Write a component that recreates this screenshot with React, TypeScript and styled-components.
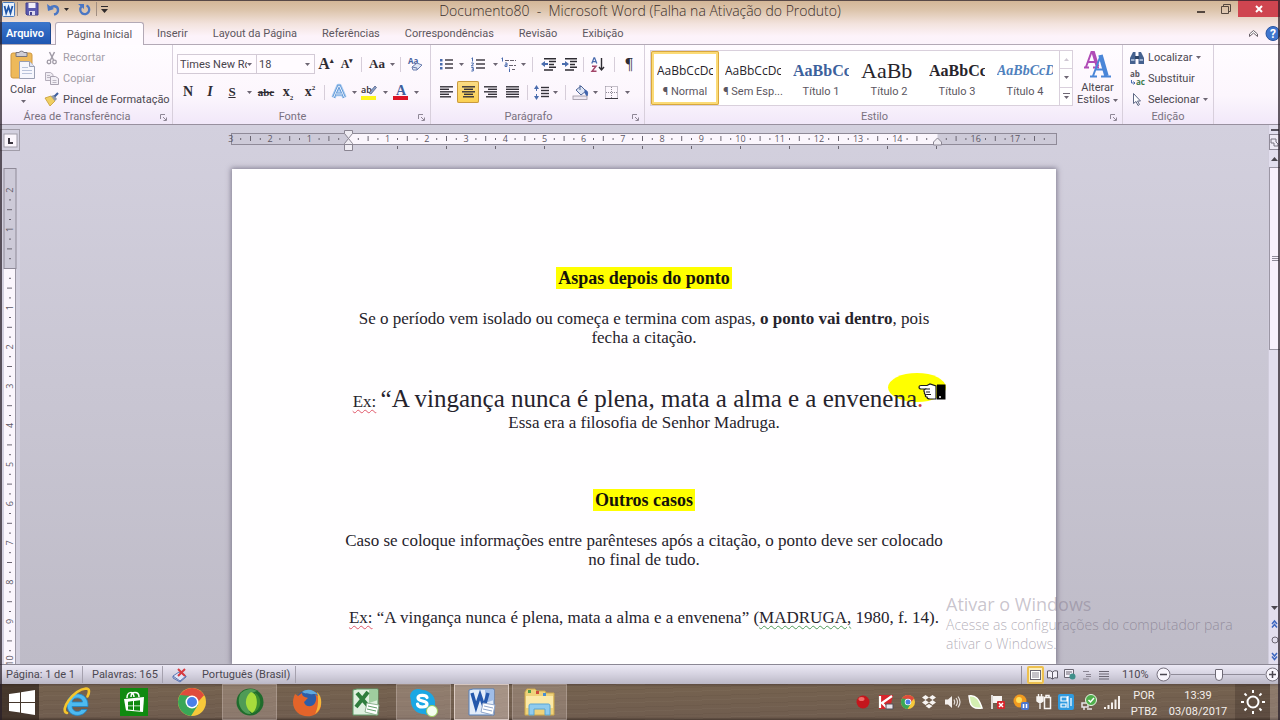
import React from 'react';
import styled, { createGlobalStyle, css } from 'styled-components';

const ui = 'Roboto, "Open Sans", sans-serif';
const humanist = '"Open Sans", "Noto Sans", sans-serif';
const serif = '"Liberation Serif", serif';

const GlobalStyle = createGlobalStyle`
  *, *::before, *::after { box-sizing: border-box; }
  body { margin: 0; font-family: ${ui}; font-size: 11px; color: #4b4750; overflow: hidden; }
  button, input, select { font: inherit; color: inherit; }
  svg { display: block; flex: none; overflow: visible; }
`;

const AppWindow = styled.div`
  position: relative;
  display: flex;
  flex-direction: column;
  height: 100vh;
  &::after {
    content: '';
    position: absolute;
    inset: 0;
    pointer-events: none;
    border: solid rgba(40, 30, 40, 0.72);
    border-width: 1px 2px 0 2px;
  }
`;

/* ---------- header ---------- */

const Header = styled.header`
  flex: none;
  background: linear-gradient(#d2b595 0, #dcc4ab 10px, #f3e3de 24px, #fdf3fa 36px, #fbf3fb 44px);
`;

const TitleBar = styled.div`
  display: grid;
  grid-template-columns: 1fr auto 1fr;
  height: 22px;
`;

const QuickAccess = styled.div`
  display: flex;
  align-items: center;
  padding-bottom: 4px;
`;

const PlainButton = styled.button`
  display: inline-flex;
  align-items: center;
  justify-content: center;
  padding: 0;
  border: 0;
  background: none;
  white-space: nowrap;
`;

const QuickButton = styled(PlainButton)<{ $w: number }>`
  width: ${(p) => p.$w}px;
  height: 18px;
`;

const QuickDivider = styled.span`
  width: 1px;
  height: 14px;
  background: #a18e82;
`;

const WindowTitle = styled.h1`
  margin: 0;
  font-family: ${humanist};
  font-size: 14px;
  line-height: 22px;
  font-weight: 300;
  color: #3a2e2b;
  white-space: pre;
`;

const WindowControls = styled.div`
  display: flex;
  justify-content: flex-end;
  align-items: flex-start;
`;

const ControlButton = styled(PlainButton)<{ $close?: boolean }>`
  width: ${(p) => (p.$close ? 42 : 25)}px;
  height: 17px;
  ${(p) => p.$close && css`background: #cf4550;`}
`;

const TabBar = styled.nav`
  display: flex;
  align-items: stretch;
  height: 23px;
  border-bottom: 1px solid #b3a9b6;
`;

const FileTab = styled(PlainButton)`
  width: 51px;
  color: #fff;
  font-weight: 600;
  background: linear-gradient(#3b76cc, #1f56b2);
  border-right: 1px solid #1c478f;
  border-radius: 0 3px 0 0;
`;

const Tab = styled(PlainButton)<{ $active?: boolean }>`
  padding: 0 12px;
  margin-left: ${(p) => (p.$active ? 4 : 1)}px;
  color: #5d5760;
  ${(p) =>
    p.$active &&
    css`
      width: 89px;
      margin-bottom: -1px;
      background: #fffbff;
      border: 1px solid #b3a9b6;
      border-bottom: 0;
      border-radius: 3px 3px 0 0;
    `}
`;

const TabBarEnd = styled.div`
  display: flex;
  align-items: center;
  gap: 7px;
  margin-left: auto;
  overflow: hidden;
`;

/* ---------- ribbon ---------- */

const Ribbon = styled.div`
  display: flex;
  flex: none;
  height: 80px;
  background: linear-gradient(#fffcff 0, #fcf6fd 50px, #f1e7f9 80px);
  border-bottom: 1px solid #98909f;
`;

const Group = styled.section<{ $w: number }>`
  display: flex;
  flex-direction: column;
  flex: none;
  width: ${(p) => p.$w}px;
  border-right: 1px solid #d8cfdc;
`;

const GroupBody = styled.div<{ $pad?: number }>`
  display: flex;
  flex: 1;
  min-height: 0;
  padding: 2px 0 0 ${(p) => p.$pad || 4}px;
`;

const GroupLabel = styled.div`
  display: flex;
  flex: none;
  height: 16px;
  line-height: 18px;
  text-align: center;
  color: #79717f;
  & > span { flex: 1; }
  & > button { width: 18px; height: 18px; }
`;

const BigButton = styled(PlainButton)<{ $w: number }>`
  flex-direction: column;
  justify-content: flex-start;
  flex: none;
  gap: 4px;
  width: ${(p) => p.$w}px;
  padding-top: 3px;
  line-height: 12px;
`;

const TwoLines = styled.span`
  display: grid;
  justify-items: center;
  span { display: flex; align-items: center; gap: 3px; }
`;

const Stack = styled.div`
  display: flex;
  flex-direction: column;
  align-items: flex-start;
`;

const RowButton = styled(PlainButton)<{ $dim?: boolean }>`
  flex: none;
  height: 21px;
  gap: 1px;
  color: ${(p) => (p.$dim ? '#a49ea8' : '#4b4750')};
  & > svg { margin-left: 3px; }
`;

const ToolRows = styled.div`
  display: flex;
  flex-direction: column;
  gap: 6px;
  padding-top: 6px;
`;

const ToolRow = styled.div`
  display: flex;
  align-items: center;
  height: 22px;
`;

const ToolButton = styled(PlainButton)<{ $active?: boolean }>`
  height: 22px;
  ${(p) =>
    p.$active &&
    css`
      background: linear-gradient(#fbdc86, #fbd04f);
      box-shadow: inset 0 0 0 1px #c99a3e;
      border-radius: 2px;
    `}
`;

const Cell = styled.span<{ $w: number }>`
  display: flex;
  justify-content: center;
  align-items: center;
  width: ${(p) => p.$w}px;
`;

const Divider = styled.span<{ $w: number }>`
  width: ${(p) => p.$w}px;
  height: 15px;
  background: linear-gradient(#d6cdd9, #d6cdd9) center / 1px 100% no-repeat;
`;

const Combo = styled.label<{ $w: number }>`
  display: flex;
  align-items: center;
  width: ${(p) => p.$w}px;
  height: 20px;
  padding-right: 4px;
  background: #fffbff;
  border: 1px solid #d3cad6;
  & + & { border-left: 0; }
  select {
    flex: 1;
    min-width: 0;
    padding: 0 0 0 2px;
    border: 0;
    background: none;
    appearance: none;
    overflow: hidden;
    text-overflow: clip;
    color: #47434b;
  }
`;

const Glyph = styled.span<{ $size: number; $bold?: boolean; $italic?: boolean; $line?: string }>`
  font-family: ${serif};
  font-size: ${(p) => p.$size}px;
  line-height: 16px;
  font-weight: ${(p) => (p.$bold ? 700 : 400)};
  font-style: ${(p) => (p.$italic ? 'italic' : 'normal')};
  text-decoration: ${(p) => p.$line || 'none'};
  color: #2f2c33;
  sub, sup { font-size: 7px; line-height: 1px; }
`;

const Gallery = styled.div`
  display: flex;
  height: 56px;
  margin-top: 3px;
  background: #fff;
  border: 1px solid #d9d0dc;
`;

const StyleCard = styled(PlainButton)<{ $active?: boolean }>`
  flex-direction: column;
  width: 68px;
  height: 54px;
  padding: 8px 6px 0;
  justify-content: flex-start;
  ${(p) => p.$active && css`box-shadow: inset 0 0 0 1px #d9a73c, inset 0 0 0 3px #fbdb77; border-radius: 2px;`}
  span { line-height: 18px; color: #5b5660; }
`;

const Sample = styled.b<{ $size: number; $color?: string; $italic?: boolean; $bold?: boolean; $face?: string }>`
  width: 56px;
  height: 24px;
  line-height: 24px;
  overflow: hidden;
  text-align: left;
  font-family: ${(p) => p.$face || serif};
  font-size: ${(p) => p.$size}px;
  font-weight: ${(p) => (p.$bold ? 700 : 400)};
  font-style: ${(p) => (p.$italic ? 'italic' : 'normal')};
  color: ${(p) => p.$color || '#27242b'};
`;

const GalleryScroll = styled.div`
  display: flex;
  flex-direction: column;
  width: 13px;
  border-left: 1px solid #d9d0dc;
  button { flex: 1; }
  button + button { border-top: 1px solid #d9d0dc; }
`;

/* ---------- workspace ---------- */

const Workspace = styled.div`
  display: grid;
  grid-template-columns: 20px minmax(0, 1fr) 12px;
  flex: 1;
  min-height: 0;
  background: linear-gradient(#d3d0de, #bebbc7);
`;

const LeftRail = styled.div`
  display: flex;
  flex-direction: column;
  min-height: 0;
  overflow: hidden;
  background: #d3d0df;
`;

const CornerBox = styled(PlainButton)`
  flex: none;
  width: 20px;
  height: 22px;
  margin: 4px 0 17px;
  padding-left: 1px;
  border: 1px solid #a19da9;
`;

const Canvas = styled.main`
  display: flex;
  flex-direction: column;
  align-items: center;
  min-height: 0;
  overflow: hidden;
`;

const RulerStrip = styled.div`
  flex: none;
  height: 44px;
  padding-top: 4px;
`;

const Sheet = styled.article`
  flex: 1 0 auto;
  width: 824px;
  padding: 98px 100px 0;
  background: #fffeff;
  box-shadow: 0 0 5px 1px rgba(80, 74, 96, 0.6);
  font-family: ${serif};
  font-size: 17px;
  line-height: 19px;
  text-align: center;
  color: #26232c;
  white-space: nowrap;
`;

const Heading = styled.h2<{ $top?: number }>`
  margin: ${(p) => p.$top || 0}px 0 20px;
  font-size: 18px;
  line-height: 22px;
  font-weight: 700;
  mark { display: inline-block; background: #ffff00; color: #15130a; padding: 0 2px; }
`;

const Para = styled.p<{ $top?: number }>`
  margin: ${(p) => p.$top || 0}px 0 0;
`;

const Quote = styled(Para)`
  height: 29px;
  padding-right: 12px;
  line-height: 30px;
`;

const QuoteText = styled.span`
  position: relative;
  z-index: 0;
  font-size: 25px;
`;

const Spotlight = styled.i`
  position: absolute;
  z-index: -1;
  right: -23px;
  top: -12px;
  width: 58px;
  height: 29px;
  border-radius: 50%;
  background: #ffff00;
`;

const Hand = styled.svg`
  position: absolute;
  right: -23px;
  top: -2px;
`;

const Spell = styled.span<{ $color: string }>`
  text-decoration: underline wavy ${(p) => p.$color} 1px;
  text-underline-offset: 2px;
`;

const RedDot = styled.span`
  color: #d33a3a;
`;

const ScrollRail = styled.div`
  display: flex;
  flex-direction: column;
  align-items: stretch;
  min-height: 0;
  background: #e2deee;
  border-left: 1px solid #d0ccdb;
  svg { margin: 0 auto; }
`;

const ScrollThumb = styled.div`
  display: flex;
  align-items: center;
  flex: 0 1 183px;
  background: #f8f0fc;
  border: 1px solid #9b96a4;
  border-right: 0;
`;

const RailSpacer = styled.div`
  flex: 1;
`;

const RailButton = styled(PlainButton)<{ $h: number; $framed?: boolean }>`
  flex: none;
  height: ${(p) => p.$h}px;
  ${(p) => p.$framed && css`border: 1px solid #8f8a98; background: #efeaf5;`}
`;

const Watermark = styled.aside`
  position: absolute;
  right: 20px;
  bottom: 67px;
  width: 314px;
  font-family: ${humanist};
  font-size: 14px;
  font-weight: 300;
  line-height: 19px;
  color: rgba(105, 95, 115, 0.5);
  pointer-events: none;
  strong { display: block; font-size: 18px; line-height: 22px; font-weight: 400; color: rgba(125, 115, 135, 0.42); }
`;

/* ---------- status bar ---------- */

const StatusBar = styled.footer`
  display: flex;
  align-items: center;
  flex: none;
  height: 20px;
  padding-left: 6px;
  background: linear-gradient(#ece9f5, #d5d2e0 50%, #bbb8c6);
  border-top: 1px solid #8b8794;
`;

const StatusItem = styled.span<{ $w: number }>`
  display: flex;
  align-items: center;
  width: ${(p) => p.$w}px;
  height: 17px;
  margin-right: 9px;
  border-right: 1px solid #a5a1ae;
  white-space: nowrap;
`;

const ViewButtons = styled.div`
  display: flex;
  align-items: center;
  margin-left: auto;
  padding-left: 5px;
  border-left: 1px solid #8f8b98;
`;

const ViewButton = styled(PlainButton)<{ $active?: boolean }>`
  width: 17px;
  height: 18px;
  ${(p) => p.$active && css`background: #fdf0bd; box-shadow: inset 0 0 0 2px #edc04f; border-radius: 2px;`}
`;

const ZoomLabel = styled.span`
  width: 44px;
  padding-left: 10px;
`;

const ZoomSlider = styled.input`
  appearance: none;
  width: 94px;
  height: 16px;
  margin: 0;
  background: linear-gradient(#8f8b98, #8f8b98) center / 100% 1px no-repeat;
  &::-webkit-slider-thumb {
    appearance: none;
    width: 8px;
    height: 12px;
    background: #fbf8ff;
    border: 1px solid #6d6975;
    border-radius: 1px 1px 4px 4px;
  }
`;

/* ---------- taskbar ---------- */

const Taskbar = styled.div`
  display: flex;
  flex: none;
  height: 36px;
  background:
    repeating-linear-gradient(178deg, rgba(40, 25, 15, 0.06) 0 1px, transparent 1px 4px, rgba(255, 240, 220, 0.03) 4px 5px, transparent 5px 9px),
    linear-gradient(#5c4b40, #75624f 3px, #705d4f 33px, #4a3b32);
  color: #f4efec;
`;

const StartButton = styled(PlainButton)`
  width: 39px;
  margin-right: 9px;
  padding-left: 4px;
  background: rgba(40, 28, 22, 0.6);
`;

const Apps = styled.div`
  display: flex;
  gap: 3px;
`;

const AppButton = styled(PlainButton)<{ $state?: 'open' | 'active' }>`
  width: 55px;
  ${(p) =>
    p.$state &&
    css`
      background: rgba(255, 235, 230, ${p.$state === 'active' ? 0.36 : 0.2});
      box-shadow: inset 0 0 0 1px rgba(255, 240, 235, ${p.$state === 'active' ? 0.6 : 0.22});
    `}
`;

const Tray = styled.div`
  display: flex;
  align-items: center;
  justify-content: space-between;
  width: 265px;
  margin-left: auto;
  margin-right: 7px;
`;

const Clock = styled.div<{ $w: number }>`
  width: ${(p) => p.$w}px;
  padding-top: 4px;
  line-height: 16px;
  text-align: center;
  white-space: nowrap;
`;

const SunBox = styled.div`
  display: flex;
  align-items: center;
  justify-content: center;
  width: 35px;
  background: rgba(40, 28, 22, 0.25);
`;

const ShowDesktop = styled(PlainButton)`
  width: 10px;
  background: rgba(255, 240, 240, 0.18);
`;

/* ---------- drawings ---------- */

const Caret = ({ color = '#6d6673' }: { color?: string }) => (
  <svg width="5" height="3" viewBox="0 0 5 3"><path d="M0 0h5L2.500 3z" fill={color} /></svg>
);

const Svg = ({ w, h, box, children }: { w: number; h: number; box?: string; children: React.ReactNode }) => (
  <svg width={w} height={h} viewBox={box || `0 0 ${w} ${h}`} fill="none">{children}</svg>
);

const lines = (rows: [number, number][], gap = 3, y0 = 1) =>
  rows.map(([a, b], i) => <path key={i} d={`M${a} ${y0 + i * gap + 0.5}H${b}`} stroke="#35323a" strokeWidth="1.4" />);

const Launcher = () => (
  <Svg w={7} h={7}><path d="M.5 5V.5H5M3 3l3 3M6.500 3.500v3h-3" stroke="#8f8796" /></Svg>
);

const WordSmall = () => (
  <Svg w={13} h={15}>
    <rect x=".5" y=".5" width="12" height="14" rx="1" fill="#e9f1fb" stroke="#4679bd" />
    <path d="M2.500 4l1.700 7L6.500 5l2 6L10.500 4" stroke="#1f55a8" strokeWidth="1.800" />
  </Svg>
);

const FloppyIcon = () => (
  <Svg w={14} h={14}>
    <path d="M1 1h12v12H2l-1-1z" fill="#5b59ae" stroke="#43418e" />
    <rect x="3.500" y="1" width="7" height="5" fill="#f2effa" />
    <rect x="4" y="9" width="6" height="4" fill="#dcd8ee" /><rect x="5" y="10" width="2" height="3" fill="#43418e" />
  </Svg>
);

const UndoIcon = () => (
  <Svg w={13} h={13}>
    <path d="M3 5.500C5 2 11 2.500 11 7c0 2.500-1.500 4-4 4.500" stroke="#4a76c4" strokeWidth="2.400" />
    <path d="M0 1l1 7 6-2z" fill="#4a76c4" />
  </Svg>
);

const RedoIcon = () => (
  <Svg w={13} h={13}>
    <path d="M8.500 2.500a4.500 4.500 0 1 1-5 1" stroke="#4a76c4" strokeWidth="2.300" />
    <path d="M0 1h6v5z" fill="#4a76c4" />
  </Svg>
);

const PasteIcon = () => (
  <Svg w={26} h={30}>
    <rect x="1" y="3" width="21" height="25" rx="2" fill="#eeb95a" stroke="#cf9740" />
    <path d="M6 2.500h3a3 3 0 0 1 5 0h3v4H6z" fill="#cfcdd4" stroke="#77737d" />
    <path d="M9.500 11.500h10l5 5v12h-15z" fill="#f7f7fd" stroke="#9a9fb3" />
    <path d="M19.500 11.500v5h5" fill="#dfe4f2" stroke="#9a9fb3" />
    <path d="M12 17.500h6M12 20.500h10M12 23.500h10" stroke="#b9c3da" />
  </Svg>
);

const CutIcon = () => (
  <Svg w={12} h={14}>
    <path d="M3.500 1l4 8M8.500 1l-4 8" stroke="#a09ba6" strokeWidth="1.500" />
    <circle cx="3" cy="11" r="1.800" stroke="#a09ba6" strokeWidth="1.300" /><circle cx="8.500" cy="11" r="1.800" stroke="#a09ba6" strokeWidth="1.300" />
  </Svg>
);

const CopyIcon = () => (
  <Svg w={14} h={13}>
    <path d="M.5.500h5l2.500 2v6H.5z" fill="#efebf2" stroke="#b4adba" /><path d="M5.500 4.500h5l3 2v6h-8z" fill="#f3eff6" stroke="#a9a2b0" />
    <path d="M2 3.500h3M2 5.500h3M7.500 8.500h4M7.500 10.500h4" stroke="#bcb6c2" />
  </Svg>
);

const BrushIcon = () => (
  <Svg w={14} h={13}>
    <path d="M0 5l6-2 4 5-5 5z" fill="#f0cf62" stroke="#c69c34" strokeWidth=".8" />
    <path d="M6 3l3-1 3 4-2 2z" fill="#8f97a8" /><path d="M9.500 3.500L13 0" stroke="#3e5f9f" strokeWidth="2.200" />
  </Svg>
);

const EraserIcon = () => (
  <Svg w={16} h={15}>
    <text x="1" y="7" fontSize="8" fontWeight="700" fill="#45609e" fontFamily="Open Sans">Aa</text>
    <path d="M5 10l5-4 5 2-5 5H6z" fill="#dfe6f5" stroke="#6b7eae" />
    <path d="M5 10l5 1v2" stroke="#6b7eae" />
  </Svg>
);

const GlowA = () => (
  <Svg w={16} h={16}>
    <path d="M2.500 13.500L7.500 2h1l5 11.500M5 10h6" stroke="#a8cbf1" strokeWidth="4.500" strokeLinejoin="round" />
    <path d="M2.500 13.500L7.500 2h1l5 11.500M5 10h6" stroke="#5c93d4" strokeWidth="2.600" />
    <path d="M2.500 13.500L7.500 2h1l5 11.500M5 10h6" stroke="#f2f8ff" strokeWidth="1" />
  </Svg>
);

const HighlightIcon = () => (
  <Svg w={16} h={16}>
    <text x="0" y="9" fontSize="9" fill="#2f2c33" fontFamily="Open Sans" fontWeight="600">ab</text>
    <path d="M8 9l6-7 1.500 1.500L10 10z" fill="#8da0c6" stroke="#45557f" strokeWidth=".7" />
    <rect x="0" y="12" width="15" height="4" fill="#fdf51c" />
  </Svg>
);

const FontColorIcon = () => (
  <Svg w={16} h={16}>
    <text x="3" y="11" fontSize="14" fill="#3f5f9e" fontFamily="Liberation Serif" fontWeight="700">A</text>
    <rect x="0" y="12" width="15" height="4" fill="#dc1426" />
  </Svg>
);

const BulletsIcon = () => (
  <Svg w={13} h={13}>
    {[1, 5, 9].map((y) => <rect key={y} x="0" y={y} width="2.500" height="2.500" fill="#4a6cae" />)}
    {lines([[5, 13], [5, 13], [5, 13]], 4, 1.5)}
  </Svg>
);

const NumberedIcon = () => (
  <Svg w={14} h={15}>
    <path d="M.5 1.500l1-.7V4.500M.3 6h2v1.200l-2 1.600h2.200M.3 10.500h2v3.500h-2M.8 12.200h1.500" stroke="#4a6cae" />
    {lines([[5, 14], [5, 14], [5, 14]], 4, 2.5)}
  </Svg>
);

const MultiIcon = () => (
  <Svg w={16} h={15}>
    <path d="M.5 1.500l1-.7V4.500M4 6h2v3.500H4V7.800h2M8.500 10.500v1M8.500 12v3" stroke="#4a6cae" />
    <path d="M4 3.500h11M8 8.500h7M11 12.500h3" stroke="#66616c" strokeDasharray="4 1" />
  </Svg>
);

const IndentIcon = ({ out }: { out?: boolean }) => (
  <Svg w={15} h={13}>
    <path d="M3 .8h12M8 3.600h7M8 6.400h5M8 9.200h7M3 12h9" stroke="#2f2c33" strokeWidth="1.500" />
    <path d={out ? 'M0 6l4-3v2h3v2H4v2z' : 'M7 6L3 3v2H0v2h3v2z'} fill="#4a6cae" />
  </Svg>
);

const SortIcon = () => (
  <Svg w={14} h={15}>
    <path d="M.8 6.500L3 .8h.6L5.800 6.500M1.600 4.700h3.400" stroke="#4a6cae" strokeWidth="1.300" />
    <path d="M1 9.200h4L1 14.200h4.500" stroke="#a24468" strokeWidth="1.400" />
    <path d="M10.500 1v11M8 10l2.500 3L13 10" stroke="#2f2c33" strokeWidth="1.400" />
  </Svg>
);

const AlignIcon = ({ kind }: { kind: 'left' | 'center' | 'right' | 'full' }) => {
  const rows: Record<string, [number, number][]> = {
    left: [[0, 13], [0, 9], [0, 13], [0, 9], [0, 11]],
    center: [[0, 13], [2, 11], [0, 13], [2, 11], [1, 12]],
    right: [[0, 13], [4, 13], [0, 13], [4, 13], [2, 13]],
    full: [[0, 13], [0, 13], [0, 13], [0, 13], [0, 13]],
  };
  return <Svg w={13} h={12}>{lines(rows[kind], 2.5, 0.3)}</Svg>;
};

const SpacingIcon = () => (
  <Svg w={15} h={15}>
    <path d="M2.500 1v13" stroke="#4a6cae" strokeDasharray="5 3" /><path d="M0 4l2.500-4L5 4zM0 11l2.500 4L5 11z" fill="#4a6cae" />
    {lines([[7, 15], [7, 15], [7, 15], [7, 15]], 3, 2)}
  </Svg>
);

const BucketIcon = () => (
  <Svg w={16} h={15}>
    <path d="M3 5l5-4 5 5-5 4z" fill="#dfe6f5" stroke="#4f6699" /><path d="M12 5c3 1 3 3 2 6l-2-3z" fill="#3f64ad" stroke="#3f64ad" />
    <path d="M7 0v5" stroke="#4f6699" /><rect x="0" y="11" width="14" height="3.500" fill="#efe8f2" stroke="#9a93a1" strokeWidth=".8" />
  </Svg>
);

const BorderIcon = () => (
  <Svg w={13} h={13}>
    <path d="M.5.500h12v12M.5.500v12M6.500 1v11M1 6.500h11" stroke="#8d8794" strokeDasharray="1 1" /><path d="M0 12.500h13" stroke="#3d3942" />
  </Svg>
);

const StylesIcon = () => (
  <Svg w={28} h={28}>
    <path d="M0 17.500h5M9 17.500h6M2 17L7.500 2h1.500l4.500 15M4 12h7" stroke="#b04bb6" strokeWidth="2" />
    <path d="M9 1.500l4.500 15" stroke="#b04bb6" strokeWidth="3.500" />
    <path d="M6 26.500h7M17 26.500h10M9 26L16.500 6M11.500 19.500h10" stroke="#4a86d8" strokeWidth="2" />
    <path d="M16.500 5l6 21" stroke="#4a86d8" strokeWidth="4.500" />
  </Svg>
);

const FindIcon = () => (
  <Svg w={14} h={12}>
    <path d="M1 4l2-4h2.500v12H0V6zM13 4l-2-4H8.500v12H14V6z" fill="#45618f" /><path d="M5 4h4v3H5z" fill="#2d4468" />
    <path d="M1 8h3.500M9.500 8H13" stroke="#bccbe4" strokeWidth="1.500" />
  </Svg>
);

const ReplaceIcon = () => (
  <Svg w={15} h={15}>
    <text x="0" y="6" fontSize="8" fontWeight="700" fill="#5b5660" fontFamily="Open Sans">ab</text>
    <text x="6" y="14" fontSize="8" fontWeight="700" fill="#3d7a4c" fontFamily="Open Sans">ac</text>
    <path d="M1.500 9v3H5M3.500 10.500L5 12l-1.500 1.500" stroke="#4a6cae" />
  </Svg>
);

const SelectIcon = () => (
  <Svg w={14} h={13}><path d="M3.500.500v10l2.500-2 2 4 1.500-1-2-3.500h3z" fill="#fff" stroke="#5d6784" /></Svg>
);

const CM = 39.2;

const HorizontalRuler = () => {
  const zero = 117.5;
  const marks: React.ReactNode[] = [];
  for (let n = -3; n <= 17; n += 1) {
    const x = zero + n * CM;
    if (n !== 0 && n !== 15) marks.push(<text key={`n${n}`} x={x} y="13">{Math.abs(n)}</text>);
    marks.push(<path key={`t${n}`} d={`M${x + CM / 4} 9v2M${x + CM / 2} 7v5M${x + (CM * 3) / 4} 9v2`} stroke="#6b6672" />);
    if (n >= 0 && n < 12) marks.push(<path key={`s${n}`} d={`M${zero + (n + 1) * 49} 17v3`} stroke="#6b6672" />);
  }
  return (
    <svg width="826" height="24" viewBox="0 0 826 24" fill="none" fontSize="9" fontFamily="Open Sans" textAnchor="middle">
      <rect x=".5" y="4.500" width="825" height="11" fill="#cdcad8" stroke="#8f8a98" />
      <rect x={zero} y="5" width="589" height="10" fill="#fbf6fd" />
      <g fill="#5d5865">{marks}</g>
      <path d="M113.500 1.500h8v3l-4 5 4 5v7h-8v-7l4-5-4-5zM113.500 15.500h8" fill="#efecf3" stroke="#8a8592" />
      <path d="M702.500 16v-3l4-4 4 4v3z" fill="#efecf3" stroke="#8a8592" />
    </svg>
  );
};

const VerticalRuler = () => {
  const zero = 100.5;
  const marks: React.ReactNode[] = [];
  for (let n = -2; n <= 24; n += 1) {
    const y = zero + n * CM;
    if (n !== 0) marks.push(<text key={`n${n}`} transform={`translate(13 ${y}) rotate(-90)`}>{Math.abs(n)}</text>);
    marks.push(<path key={`t${n}`} d={`M9 ${y + CM / 4}h2M7 ${y + CM / 2}h5M9 ${y + (CM * 3) / 4}h2`} stroke="#6b6672" />);
  }
  return (
    <svg width="20" height="1080" viewBox="0 0 20 1080" fill="none" fontSize="9" fontFamily="Open Sans" textAnchor="middle">
      <rect x="4" y=".5" width="12" height="100" fill="#cdcad8" stroke="#8f8a98" />
      <rect x="4" y="101" width="11" height="980" fill="#fbf6fd" /><path d="M15.500 101v980" stroke="#9b96a4" />
      <g fill="#5d5865">{marks}</g>
    </svg>
  );
};

const WindowsLogo = () => (
  <Svg w={26} h={25}><path d="M0 4l11-1.600V12H0zM12 2.200L26 0v12H12zM0 13h11v9.500L0 21zM12 13h14v12l-14-2.200z" fill="#fff" /></Svg>
);

const IeIcon = () => (
  <Svg w={30} h={30}>
    <path d="M27 19.500H11c.5 5.500 7 6.500 9.500 3H26c-4 9-20 8-20-5C6 3 28 3 27 19.500zM11 15h10.500c-.5-5.500-10-5.500-10.500 0z" fill="#4dbaf0" stroke="#1f86c8" strokeWidth=".8" />
    <path d="M6 26C-2 24 12 3 25 1.500c4 0 3.500 4 1.500 8" stroke="#f5c52c" strokeWidth="2.600" strokeLinecap="round" />
  </Svg>
);

const StoreIcon = () => (
  <Svg w={28} h={28}>
    <path d="M0 0h28v28H0z" fill="#108a10" /><path d="M4 11l20-2-1 15-17-1.500z" fill="#fff" />
    <path d="M7 10C7 3 14 3 14 9M11 9c0-6 8-6 8 0" stroke="#fff" strokeWidth="1.500" />
    <path d="M8 13.700l5-.6V17.500H8zM14 13l6-.7v5.200h-6zM8 18.300h5v3.700l-5-.4zM14 18.300h6v4.500l-6-.6z" fill="#108a10" />
  </Svg>
);

const ChromeIcon = ({ size }: { size: number }) => (
  <Svg w={size} h={size} box="0 0 28 28">
    <circle cx="14" cy="14" r="14" fill="#f6c83a" /><path d="M14 14L1.900 7A14 14 0 0 1 26.100 7z" fill="#df4b3c" />
    <path d="M14 14L1.900 7A14 14 0 0 0 13 28l7-11z" fill="#3aa757" /><path d="M8 17.500L1.900 7 14 8z" fill="#3aa757" />
    <path d="M14 7h12.100L20 14z" fill="#df4b3c" /><circle cx="14" cy="14" r="6.500" fill="#fff" /><circle cx="14" cy="14" r="5" fill="#4a7fe8" />
  </Svg>
);

const CamtasiaIcon = () => (
  <Svg w={28} h={28}>
    <circle cx="14" cy="14" r="13.500" fill="#1f6b2c" /><path d="M5 5a13 13 0 0 1 16-2C12 5 9 17 15 26 6 27-1 14 5 5z" fill="#4f9b56" />
    <path d="M15 4c9 3 9 17 1 21C8 20 8 9 15 4z" fill="#a6dc3c" /><path d="M18 4c9 5 8 17-1 21 5-6 5-14 1-21z" fill="#3c8f2e" />
  </Svg>
);

const FirefoxIcon = () => (
  <Svg w={29} h={29}>
    <circle cx="15" cy="14" r="12" fill="#2c5da8" /><path d="M9 4c5-4 13-2 16 3-4-2-5 0-8-1s-5 0-8-2z" fill="#5fa8de" />
    <path d="M2 6l3 2 4-3c0 3 2 4 6 5-2 1-2 3-4 4 1 5 8 6 11 1 2-4 1-7 0-9 8 5 8 15 1 20C13 32 0 26 0 14c0-3 1-6 2-8z" fill="#e4642a" />
    <path d="M24 4c6 5 6 17-2 22 3-5 4-14 2-22z" fill="#f6b73a" />
  </Svg>
);

const OfficeIcon = ({ excel }: { excel?: boolean }) => (
  <Svg w={28} h={28}>
    <path d="M1 2l4-1h21v26H1z" fill={excel ? '#dff0df' : '#e3ecf9'} stroke={excel ? '#5f9d68' : '#5480bd'} />
    <path d="M17 2h9v10l-9 3z" fill={excel ? '#9fce9f' : '#9fbde8'} />
    {excel ? (
      <path d="M5 5l12 14M16 4L4 19" stroke="#2f7d3d" strokeWidth="4" />
    ) : (
      <path d="M4 5l4 14 4-12 4 12 4-14" stroke="#2558ac" strokeWidth="3.400" />
    )}
    <path d="M15 15l12 2-2 10-12-3z" fill="#fff" stroke={excel ? '#8fb391' : '#90a6cb'} />
    <path d="M16 18l9 2M15 21l9 2" stroke={excel ? '#5f9d68' : '#90a6cb'} />
  </Svg>
);

const SkypeIcon = () => (
  <Svg w={29} h={29}>
    <path d="M1 8a8 8 0 0 1 12-6A13 13 0 0 1 26 17c2 8-5 12-11 9A13 13 0 0 1 2 13z" fill="#1ba7e4" />
    <path d="M18 9.500c-1-3-9-3-9 .5 0 4 9 2 9 6 0 4-9 4-9.500 0" stroke="#fff" strokeWidth="3.200" strokeLinecap="round" />
    <circle cx="23" cy="23" r="5.500" fill="#f5fff0" stroke="#9bcf5a" />
  </Svg>
);

const FolderIcon = () => (
  <Svg w={31} h={28}>
    <path d="M1 4l2-3h8l2 2h8l1 2h8v22H1z" fill="#efd27a" stroke="#cda94c" /><path d="M4 2h3v3H4z" fill="#4f9c4a" /><path d="M12 3h3v3h-3z" fill="#cf4c3c" /><path d="M19 5h3v3h-3z" fill="#4a8ed0" />
    <path d="M2 8h27v12H2z" fill="#fbe9a8" /><path d="M5 27V18c0-2 1-2 2-2h17c1 0 2 0 2 2v9h-5v-6H10v6z" fill="#8fcbee" stroke="#5ba4d2" />
  </Svg>
);

const trayIcons: [string, React.ReactNode][] = [
  ['Gravador', <><circle cx="8" cy="8" r="6.500" fill="#c4161c" /><ellipse cx="6.500" cy="5" rx="3" ry="2" fill="#ee6a66" /></>],
  ['Antivírus', <><path d="M1 1h14l-3 14H1z" fill="#d7262c" /><path d="M2 2v12M14 2L4 9l5 5" stroke="#fff" strokeWidth="2.200" /><path d="M8 10h7v5H8z" fill="#e8e4ea" stroke="#55505a" /></>],
  ['Chrome', null],
  ['Dropbox', <path d="M4.500 1L8 3.500 4.500 6 1 3.500zM11.500 1L15 3.500 11.500 6 8 3.500zM4.500 6L8 8.500 4.500 11 1 8.500zM11.500 6L15 8.500 11.500 11 8 8.500zM4.500 12L8 10l3.500 2L8 14.500z" fill="#f7f4f2" />],
  ['Volume', <><path d="M1 5.500h3L8 2v12l-4-3.500H1z" fill="#f4efec" /><path d="M10 5.500q1.500 2.500 0 5M12 4q3 4 0 8M14 2.500q4 5.500 0 11" stroke="#e7e0dc" strokeWidth="1.200" /></>],
  ['Energia', <path d="M2 2c7-1 10 3 13 12-8 1-11-1-12-6z" fill="#d4efb2" stroke="#fff" strokeWidth="1.500" />],
  ['Central de Ações', <><path d="M2 1v14" stroke="#fff" strokeWidth="1.500" /><path d="M3 2h9v7H3z" fill="#f7f4f2" /><rect x="7" y="7" width="8" height="8" rx="1" fill="#d7262c" /><path d="M9 9l4 4M13 9l-4 4" stroke="#fff" strokeWidth="1.500" /></>],
  ['Atualizador', <><circle cx="7" cy="7" r="6.500" fill="#f19a20" /><circle cx="6" cy="6" r="3" fill="#ffe05c" /><rect x="8" y="8" width="8" height="8" rx="2" fill="#4c76cf" /><path d="M10.500 10v4M13.500 10v4" stroke="#fff" strokeWidth="1.500" /></>],
  ['Bateria', <><path d="M8.500 3.500h6v11h-6zM10 1.500h3v2h-3z" stroke="#f7f4f2" strokeWidth="1.500" /><path d="M1 3h6v4q-3 3-6 0zM2.500 0v3M5.500 0v3M4 8v7" stroke="#f7f4f2" strokeWidth="1.400" fill="#f7f4f2" /></>],
  ['Vídeo', <><rect width="16" height="16" rx="2" fill="#2f9be0" /><path d="M3 3h6v4H3zM10 2v12M3 10h5v3H3zM13 4v8" stroke="#fff" strokeWidth="1.200" /></>],
  ['Dispositivo', <><path d="M1 9h6v4H1zM3 13v3M9 11l5-2M6 15h5" stroke="#e6e2e8" strokeWidth="1.500" /><circle cx="10" cy="6" r="5.500" fill="#4fae4c" stroke="#e9f6e4" /><path d="M7.500 6l2 2 3.500-4" stroke="#fff" strokeWidth="1.500" /></>],
  ['Rede', <path d="M0 13h2v2H0zM3.500 11h2v4h-2zM7 8.500h2V15H7zM10.500 5.500h2V15h-2zM14 2h2v13h-2z" fill="#f4efec" />],
];

/* ---------- composed pieces ---------- */

type ToolProps = { label: string; w: number; c?: number; active?: boolean; children: React.ReactNode };

const Tool = ({ label, w, c, active, children }: ToolProps) => (
  <ToolButton type="button" aria-label={label} $active={active}>
    <Cell $w={w}>{children}</Cell>
    {c ? <Cell $w={c}><Caret /></Cell> : null}
  </ToolButton>
);

const Footer = ({ name, launcher = true }: { name: string; launcher?: boolean }) => (
  <GroupLabel>
    <span>{name}</span>
    {launcher && <PlainButton type="button" aria-label={`Opções de ${name}`}><Launcher /></PlainButton>}
  </GroupLabel>
);

const blue = '#3c619c';
const styleCards = [
  { name: '¶ Normal', text: 'AaBbCcDc', size: 12, face: humanist, active: true },
  { name: '¶ Sem Esp...', text: 'AaBbCcDc', size: 12, face: humanist },
  { name: 'Título 1', text: 'AaBbCc', size: 16, bold: true, color: blue },
  { name: 'Título 2', text: 'AaBb', size: 22 },
  { name: 'Título 3', text: 'AaBbCc', size: 16, bold: true },
  { name: 'Título 4', text: 'AaBbCcDd', size: 14, bold: true, italic: true, color: '#4f81bd' },
];

const tabs = ['Inserir', 'Layout da Página', 'Referências', 'Correspondências', 'Revisão', 'Exibição'];

export default function App() {
  return (
    <>
      <GlobalStyle />
      <AppWindow>
        <Header>
          <TitleBar>
            <QuickAccess>
              <QuickButton type="button" aria-label="Word" $w={17}><WordSmall /></QuickButton>
              <QuickDivider />
              <QuickButton type="button" aria-label="Salvar" $w={28}><FloppyIcon /></QuickButton>
              <QuickButton type="button" aria-label="Desfazer" $w={15}><UndoIcon /></QuickButton>
              <QuickButton type="button" aria-label="Opções de desfazer" $w={11}><Caret color="#2f2a2c" /></QuickButton>
              <QuickButton type="button" aria-label="Refazer" $w={24}><RedoIcon /></QuickButton>
              <QuickDivider />
              <QuickButton type="button" aria-label="Personalizar" $w={15}>
                <Svg w={7} h={7}><path d="M0 .5h7" stroke="#2f2a2c" /><path d="M0 3h7L3.500 7z" fill="#2f2a2c" /></Svg>
              </QuickButton>
            </QuickAccess>
            <WindowTitle>{'Documento80  -  Microsoft Word (Falha na Ativação do Produto)'}</WindowTitle>
            <WindowControls>
              <ControlButton type="button" aria-label="Minimizar"><Svg w={8} h={9}><path d="M0 8h8" stroke="#54473f" strokeWidth="2" /></Svg></ControlButton>
              <ControlButton type="button" aria-label="Restaurar">
                <Svg w={10} h={10}><path d="M2.500 2.500v-2h7v7h-2M.5 2.500h7v7h-7z" stroke="#54473f" /></Svg>
              </ControlButton>
              <ControlButton type="button" aria-label="Fechar" $close><Svg w={8} h={8}><path d="M1 1l6 6M7 1L1 7" stroke="#fff" strokeWidth="2" /></Svg></ControlButton>
            </WindowControls>
          </TitleBar>
          <TabBar>
            <FileTab type="button">Arquivo</FileTab>
            <Tab type="button" $active>Página Inicial</Tab>
            {tabs.map((t) => <Tab key={t} type="button">{t}</Tab>)}
            <TabBarEnd>
              <PlainButton type="button" aria-label="Minimizar faixa"><Svg w={9} h={7}><path d="M.5 4l4-3.500 4 3.500v2.500l-4-3.500-4 3.500z" fill="#fff" stroke="#6a6168" /></Svg></PlainButton>
              <PlainButton type="button" aria-label="Ajuda">
                <Svg w={15} h={15}><circle cx="8" cy="7.500" r="7" fill="#3f76cf" stroke="#2a559f" /><text x="8" y="12" fontSize="12" fontWeight="700" fill="#fff" textAnchor="middle">?</text></Svg>
              </PlainButton>
            </TabBarEnd>
          </TabBar>
        </Header>

        <Ribbon>
          <Group $w={173}>
            <GroupBody>
              <BigButton type="button" $w={38}>
                <PasteIcon />
                <span>Colar</span>
                <Caret />
              </BigButton>
              <Stack>
                <RowButton type="button" $dim><Cell $w={20}><CutIcon /></Cell>Recortar</RowButton>
                <RowButton type="button" $dim><Cell $w={20}><CopyIcon /></Cell>Copiar</RowButton>
                <RowButton type="button"><Cell $w={20}><BrushIcon /></Cell>Pincel de Formatação</RowButton>
              </Stack>
            </GroupBody>
            <Footer name="Área de Transferência" />
          </Group>

          <Group $w={258}>
            <GroupBody>
              <ToolRows>
                <ToolRow>
                  <Combo $w={80}><select aria-label="Fonte" defaultValue="t"><option value="t">Times New Roman</option></select><Caret /></Combo>
                  <Combo $w={58}><select aria-label="Tamanho da fonte" defaultValue="18"><option>18</option></select><Caret /></Combo>
                  <Tool label="Aumentar fonte" w={22}><Glyph $size={16} $bold>A<sup>▴</sup></Glyph></Tool>
                  <Tool label="Reduzir fonte" w={20}><Glyph $size={12} $bold>A<sup>▾</sup></Glyph></Tool>
                  <Divider $w={9} />
                  <Tool label="Maiúsculas e minúsculas" w={22} c={8}><Glyph $size={13} $bold>Aa</Glyph></Tool>
                  <Divider $w={9} />
                  <Tool label="Limpar formatação" w={20}><EraserIcon /></Tool>
                </ToolRow>
                <ToolRow>
                  <Tool label="Negrito" w={22}><Glyph $size={14} $bold>N</Glyph></Tool>
                  <Tool label="Itálico" w={22}><Glyph $size={14} $italic $bold>I</Glyph></Tool>
                  <Tool label="Sublinhado" w={22} c={12}><Glyph $size={13} $bold $line="underline">S</Glyph></Tool>
                  <Tool label="Tachado" w={22}><Glyph $size={11} $bold $line="line-through">abc</Glyph></Tool>
                  <Tool label="Subscrito" w={22}><Glyph $size={14} $bold>x<sub>2</sub></Glyph></Tool>
                  <Tool label="Sobrescrito" w={22}><Glyph $size={14} $bold>x<sup>2</sup></Glyph></Tool>
                  <Divider $w={7} />
                  <Tool label="Efeitos de texto" w={22} c={8}><GlowA /></Tool>
                  <Tool label="Realce" w={22} c={11}><HighlightIcon /></Tool>
                  <Tool label="Cor da fonte" w={20} c={10}><FontColorIcon /></Tool>
                </ToolRow>
              </ToolRows>
            </GroupBody>
            <Footer name="Fonte" />
          </Group>

          <Group $w={214}>
            <GroupBody>
              <ToolRows>
                <ToolRow>
                  <Tool label="Marcadores" w={22} c={8}><BulletsIcon /></Tool>
                  <Tool label="Numeração" w={26} c={8}><NumberedIcon /></Tool>
                  <Tool label="Vários níveis" w={20} c={8}><MultiIcon /></Tool>
                  <Divider $w={10} />
                  <Tool label="Diminuir recuo" w={22}><IndentIcon out /></Tool>
                  <Tool label="Aumentar recuo" w={20}><IndentIcon /></Tool>
                  <Divider $w={9} />
                  <Tool label="Classificar" w={20}><SortIcon /></Tool>
                  <Divider $w={12} />
                  <Tool label="Mostrar tudo" w={18}><Glyph $size={16}>¶</Glyph></Tool>
                </ToolRow>
                <ToolRow>
                  <Tool label="Alinhar à esquerda" w={22}><AlignIcon kind="left" /></Tool>
                  <Tool label="Centralizar" w={22} active><AlignIcon kind="center" /></Tool>
                  <Tool label="Alinhar à direita" w={22}><AlignIcon kind="right" /></Tool>
                  <Tool label="Justificar" w={22}><AlignIcon kind="full" /></Tool>
                  <Divider $w={8} />
                  <Tool label="Espaçamento" w={20} c={8}><SpacingIcon /></Tool>
                  <Divider $w={12} />
                  <Tool label="Sombreamento" w={20} c={8}><BucketIcon /></Tool>
                  <Tool label="Bordas" w={24} c={8}><BorderIcon /></Tool>
                </ToolRow>
              </ToolRows>
            </GroupBody>
            <Footer name="Parágrafo" />
          </Group>

          <Group $w={478}>
            <GroupBody $pad={5}>
              <Gallery>
                {styleCards.map((s) => (
                  <StyleCard key={s.name} type="button" $active={s.active}>
                    <Sample $size={s.size} $face={s.face} $bold={s.bold} $italic={s.italic} $color={s.color}>{s.text}</Sample>
                    <span>{s.name}</span>
                  </StyleCard>
                ))}
                <GalleryScroll>
                  <PlainButton type="button" aria-label="Subir"><Svg w={5} h={3}><path d="M0 3h5L2.500 0z" fill="#cfc8d3" /></Svg></PlainButton>
                  <PlainButton type="button" aria-label="Descer"><Caret /></PlainButton>
                  <PlainButton type="button" aria-label="Mais"><Svg w={7} h={6}><path d="M0 .5h7" stroke="#6d6673" /><path d="M1 3h5L3.500 6z" fill="#6d6673" /></Svg></PlainButton>
                </GalleryScroll>
              </Gallery>
              <BigButton type="button" $w={49}>
                <StylesIcon />
                <TwoLines>
                  <span>Alterar</span>
                  <span>Estilos <Caret /></span>
                </TwoLines>
              </BigButton>
            </GroupBody>
            <Footer name="Estilo" />
          </Group>

          <Group $w={91}>
            <GroupBody>
              <Stack>
                <RowButton type="button"><Cell $w={20}><FindIcon /></Cell>Localizar<Caret /></RowButton>
                <RowButton type="button"><Cell $w={20}><ReplaceIcon /></Cell>Substituir</RowButton>
                <RowButton type="button"><Cell $w={20}><SelectIcon /></Cell>Selecionar<Caret /></RowButton>
              </Stack>
            </GroupBody>
            <Footer name="Edição" launcher={false} />
          </Group>
        </Ribbon>

        <Workspace>
          <LeftRail>
            <CornerBox type="button" aria-label="Tabulação">
              <Svg w={13} h={13}><rect width="13" height="13" fill="#fbf6fd" stroke="#a19da9" /><path d="M5 4v5h4" stroke="#3a3640" strokeWidth="2" /></Svg>
            </CornerBox>
            <VerticalRuler />
          </LeftRail>
          <Canvas>
            <RulerStrip><HorizontalRuler /></RulerStrip>
            <Sheet>
              <Heading><mark>Aspas depois do ponto</mark></Heading>
              <Para>
                Se o período vem isolado ou começa e termina com aspas, <b>o ponto vai dentro</b>, pois<br />
                fecha a citação.
              </Para>
              <Quote $top={37}>
                <Spell $color="#e0586a">Ex:</Spell>{' '}
                <QuoteText>
                  <Spotlight />
                  “A vingança nunca é plena, mata a alma e a envenena<RedDot>.</RedDot>
                  <Hand width="28" height="18" viewBox="0 0 28 18" fill="none">
                    <path d="M1 4c0-1.500 1-1.500 2-1.500h6L12 1l6 2v13h-6c-2 0-3-1-3-2-2 0-2-1.500-1-2.500-2 0-2-2-1-2.500-1.500 0-1.500-2 0-3H3C2 6 1 5.500 1 4z" fill="#fff" stroke="#1b1920" strokeWidth="1.200" />
                    <path d="M7 6h5M8 9h4M9 11.500h4" stroke="#1b1920" /><path d="M19 1.500h8.500v15H19z" fill="#000" /><circle cx="22" cy="14" r="1" fill="#fff" />
                  </Hand>
                </QuoteText>
              </Quote>
              <Para>Essa era a filosofia de Senhor Madruga.</Para>
              <Heading $top={57}><mark>Outros casos</mark></Heading>
              <Para>
                Caso se coloque informações entre parênteses após a citação, o ponto deve ser colocado<br />
                no final de tudo.
              </Para>
              <Para $top={39}>
                <Spell $color="#e0586a">Ex:</Spell> “A vingança nunca é plena, mata a alma e a envenena” (<Spell $color="#4f9c5a">MADRUGA,</Spell> 1980, f. 14).
              </Para>
            </Sheet>
          </Canvas>
          <ScrollRail>
            <RailButton type="button" aria-label="Dividir" $h={9}><Svg w={8} h={2}><path d="M0 1h8" stroke="#55505c" strokeWidth="2" /></Svg></RailButton>
            <RailButton type="button" aria-label="Régua" $h={16} $framed><Svg w={9} h={9}><path d="M1 1h5v3l2 2v2H4V5H1z" stroke="#77727f" /></Svg></RailButton>
            <RailButton type="button" aria-label="Rolar para cima" $h={17}><Svg w={7} h={4}><path d="M0 4h7L3.500 0z" fill="#4b4750" /></Svg></RailButton>
            <ScrollThumb><Svg w={7} h={8}><path d="M0 1.500h7M0 3.500h7M0 5.500h7" stroke="#8f8a98" /></Svg></ScrollThumb>
            <RailSpacer />
            <RailButton type="button" aria-label="Rolar para baixo" $h={14}><Svg w={7} h={4}><path d="M0 0h7L3.500 4z" fill="#4b4750" /></Svg></RailButton>
            <RailButton type="button" aria-label="Anterior" $h={17}><Svg w={7} h={8}><path d="M1 4l2.500-3L6 4M1 7.500l2.500-3 2.500 3" stroke="#3c67c0" strokeWidth="1.500" /></Svg></RailButton>
            <RailButton type="button" aria-label="Procurar objeto" $h={15}><Svg w={8} h={8}><circle cx="4" cy="4" r="3" stroke="#6d6875" /></Svg></RailButton>
            <RailButton type="button" aria-label="Próxima" $h={17}><Svg w={7} h={8}><path d="M1 1l2.500 3L6 1M1 4.500l2.500 3 2.500-3" stroke="#3c67c0" strokeWidth="1.500" /></Svg></RailButton>
          </ScrollRail>
        </Workspace>

        <StatusBar>
          <StatusItem $w={77}>Página: 1 de 1</StatusItem>
          <StatusItem $w={71}>Palavras: 165</StatusItem>
          <StatusItem $w={124}>
            <Cell $w={14}><Svg w={15} h={14}><path d="M1 8l6-4 7 4-6 5z" fill="#dfe6f7" stroke="#5b76b5" /><path d="M1 8v2l7 4 6-5V8" stroke="#5b76b5" /><path d="M6 1l7 7M13 1L6 8" stroke="#d83a3f" strokeWidth="2" /></Svg></Cell>
            <Cell $w={16} />Português (Brasil)
          </StatusItem>
          <ViewButtons>
            <ViewButton type="button" aria-label="Layout de impressão" $active><Svg w={11} h={10}><rect x=".5" y=".5" width="10" height="9" fill="#fff" stroke="#6a6672" /><path d="M2 3h7M2 5h7M2 7h7" stroke="#8a8592" /></Svg></ViewButton>
            <ViewButton type="button" aria-label="Leitura"><Svg w={11} h={10}><path d="M.5 1q3-1 5 1 2-2 5-1v7q-3-1-5 1-2-2-5-1zM5.500 2v7" fill="#f4f1f9" stroke="#5e5a67" /></Svg></ViewButton>
            <ViewButton type="button" aria-label="Layout da Web"><Svg w={12} h={11}><path d="M.5.500h9v8h-9zM2 3h6M2 5h4" fill="#f4f1f9" stroke="#6a6672" /><circle cx="8.500" cy="7.500" r="3" fill="#3f8f8a" /></Svg></ViewButton>
            <ViewButton type="button" aria-label="Estrutura"><Svg w={10} h={10}><path d="M1 1.500h6M4 4.500h5M4 6.500h5M1 9h6" stroke="#8a8592" /></Svg></ViewButton>
            <ViewButton type="button" aria-label="Rascunho"><Svg w={10} h={10}><path d="M0 1.500h10M0 4h10M0 6.500h10M0 9h10" stroke="#6a6672" /></Svg></ViewButton>
          </ViewButtons>
          <ZoomLabel>110%</ZoomLabel>
          <PlainButton type="button" aria-label="Reduzir zoom"><Svg w={15} h={15}><circle cx="7.500" cy="7.500" r="6.500" fill="#f8f5fc" stroke="#77727f" /><path d="M4 7.500h7" stroke="#4b4750" strokeWidth="1.500" /></Svg></PlainButton>
          <ZoomSlider type="range" aria-label="Zoom" min={0} max={100} defaultValue={51} />
          <PlainButton type="button" aria-label="Aumentar zoom"><Svg w={15} h={15}><circle cx="7.500" cy="7.500" r="6.500" fill="#f8f5fc" stroke="#77727f" /><path d="M4 7.500h7M7.500 4v7" stroke="#4b4750" strokeWidth="1.500" /></Svg></PlainButton>
        </StatusBar>

        <Taskbar>
          <StartButton type="button" aria-label="Iniciar"><WindowsLogo /></StartButton>
          <Apps>
            <AppButton type="button" aria-label="Internet Explorer"><IeIcon /></AppButton>
            <AppButton type="button" aria-label="Loja"><StoreIcon /></AppButton>
            <AppButton type="button" aria-label="Chrome"><ChromeIcon size={28} /></AppButton>
            <AppButton type="button" aria-label="Camtasia" $state="open"><CamtasiaIcon /></AppButton>
            <AppButton type="button" aria-label="Firefox"><FirefoxIcon /></AppButton>
            <AppButton type="button" aria-label="Excel"><OfficeIcon excel /></AppButton>
            <AppButton type="button" aria-label="Skype" $state="open"><SkypeIcon /></AppButton>
            <AppButton type="button" aria-label="Word" $state="active"><OfficeIcon /></AppButton>
            <AppButton type="button" aria-label="Explorador de Arquivos" $state="open"><FolderIcon /></AppButton>
          </Apps>
          <Tray>
            {trayIcons.map(([name, art]) => (
              <PlainButton key={name} type="button" aria-label={name}>
                {art ? <Svg w={16} h={16}>{art}</Svg> : <ChromeIcon size={14} />}
              </PlainButton>
            ))}
          </Tray>
          <Clock $w={34}>POR<br />PTB2</Clock>
          <Clock $w={74}>13:39<br />03/08/2017</Clock>
          <SunBox>
            <Svg w={26} h={26}>
              <circle cx="13" cy="13" r="5.500" stroke="#fff" strokeWidth="2" />
              {[0, 45, 90, 135, 180, 225, 270, 315].map((a) => <path key={a} d="M13 1v3" stroke="#fff" strokeWidth="2" transform={`rotate(${a} 13 13)`} />)}
            </Svg>
          </SunBox>
          <ShowDesktop type="button" aria-label="Mostrar área de trabalho" />
        </Taskbar>

        <Watermark>
          <strong>Ativar o Windows</strong>
          Acesse as configurações do computador para ativar o Windows.
        </Watermark>
      </AppWindow>
    </>
  );
}
